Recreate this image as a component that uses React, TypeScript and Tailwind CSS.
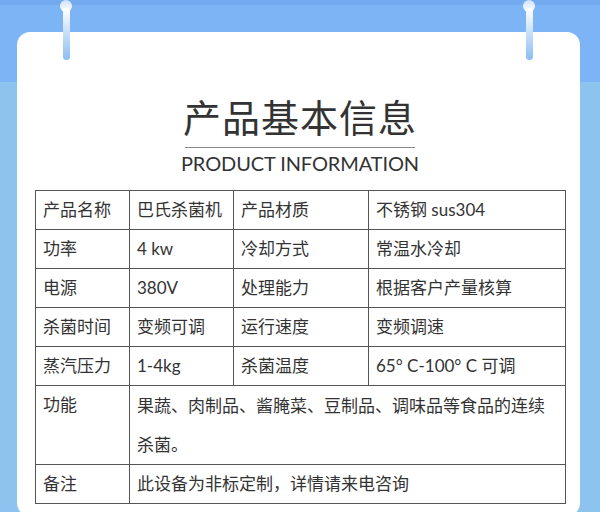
import React from "react";

const FONT = 'Lato, "Noto Sans CJK SC", sans-serif';

type Row = [string, React.ReactNode, string?, string?];

const rows: Row[] = [
  ["产品名称", "巴氏杀菌机", "产品材质", "不锈钢 sus304"],
  ["功率", "4 kw", "冷却方式", "常温水冷却"],
  ["电源", "380V", "处理能力", "根据客户产量核算"],
  ["杀菌时间", "变频可调", "运行速度", "变频调速"],
  ["蒸汽压力", "1-4kg", "杀菌温度", "65° C-100° C 可调"],
];

const Pin = ({ left }: { left: string }) => (
  <div className={`absolute top-0 ${left} flex w-[12px] flex-col items-center`}>
    <div className="h-[12px] w-[12px] rounded-full bg-gradient-to-b from-[#cfe3fb] to-white" />
    <div className="-mt-[4px] h-[52px] w-[7px] rounded-b-full bg-gradient-to-b from-white to-[#8dbdf0]" />
  </div>
);

const cell = "border border-[#555] px-[7px] align-top leading-[38px]";

export default function App() {
  return (
    <div
      className="relative h-[512px] w-[600px] overflow-hidden bg-[#8cc4ef]"
      style={{ fontFamily: FONT }}
    >
      <div className="absolute left-0 right-0 top-0 h-[82px] bg-[#7db4f6]">
        <div className="h-[5px] bg-[#73a9ef]" />
      </div>

      <div className="relative ml-[17px] mt-[32px] h-[484px] w-[563px] rounded-[13px] bg-white pl-[18px] pt-[64px]">
        <div className="flex w-[530px] flex-col items-center">
          <h1 className="text-[38px] font-normal leading-[42px] tracking-[1px] text-[#333]">
            产品基本信息
          </h1>
          <div className="mt-[9px] h-px w-[230px] bg-[#888]" />
          <div className="mt-[3px] text-[20px] leading-[24px] tracking-[-0.1px] text-[#333]">
            PRODUCT INFORMATION
          </div>
        </div>

        <table className="mt-[15px] w-[530px] table-fixed border-collapse text-[17px] text-[#333]">
          <colgroup>
            <col className="w-[94px]" />
            <col className="w-[104px]" />
            <col className="w-[135px]" />
            <col className="w-[197px]" />
          </colgroup>
          <tbody>
            {rows.map((r) => (
              <tr key={r[0]}>
                <td className={cell}>{r[0]}</td>
                <td className={cell}>{r[1]}</td>
                <td className={cell}>{r[2]}</td>
                <td className={cell}>{r[3]}</td>
              </tr>
            ))}
            <tr>
              <td className={cell}>功能</td>
              <td
                className="whitespace-nowrap border border-[#555] px-[7px] align-top leading-[39px]"
                colSpan={3}
              >
                果蔬、肉制品、酱腌菜、豆制品、调味品等食品的连续
                <br />
                杀菌。
              </td>
            </tr>
            <tr>
              <td className={cell}>备注</td>
              <td className={cell} colSpan={3}>
                此设备为非标定制，详情请来电咨询
              </td>
            </tr>
          </tbody>
        </table>
      </div>

      <Pin left="left-[60px]" />
      <Pin left="left-[523px]" />
    </div>
  );
}
